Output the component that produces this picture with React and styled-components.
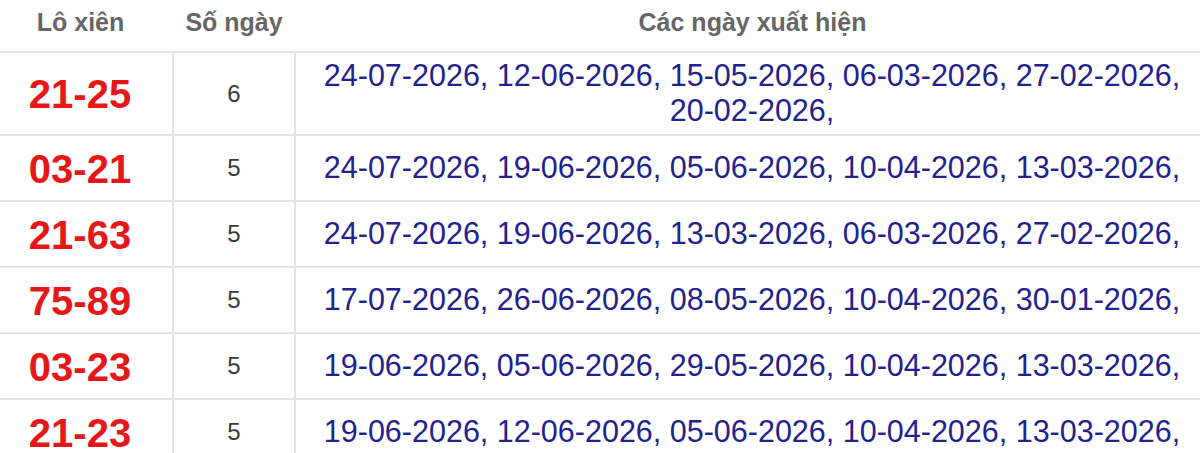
import React from "react";
import styled, { createGlobalStyle } from "styled-components";

const GlobalStyle = createGlobalStyle`
  html, body {
    margin: 0;
    padding: 0;
    background: #ffffff;
    overflow: hidden;
  }
  body {
    font-family: "Liberation Sans", Arial, sans-serif;
  }
`;

const Table = styled.table`
  width: 1200px;
  border-collapse: collapse;
  table-layout: fixed;
`;

const HeadCell = styled.th`
  height: 52px;
  padding: 0;
  font-size: 25px;
  font-weight: 700;
  color: #666666;
  text-align: center;
  vertical-align: top;
  padding-top: 8px;
  box-sizing: border-box;
  border-bottom: 2px solid #e4e4e4;
  padding-right: ${(p) => (p.$first ? "12px" : "0")};
  padding-left: ${(p) => (p.$last ? "10px" : "0")};
`;

const Row = styled.tr`
  height: ${(p) => (p.$tall ? "83px" : "66px")};
`;

const Cell = styled.td`
  border-bottom: 2px solid #e4e4e4;
  border-left: ${(p) => (p.$first ? "none" : "2px solid #e4e4e4")};
  text-align: center;
  vertical-align: middle;
  padding: 0;
`;

const Pair = styled(Cell)`
  font-size: 40px;
  font-weight: 700;
  color: #e51717;
  padding-right: 12px;
  padding-top: 2px;
`;

const Count = styled(Cell)`
  font-size: 24px;
  color: #3a3a3a;
`;

const Dates = styled(Cell)`
  font-size: 30.5px;
  line-height: 35px;
  color: #22228f;
  padding-left: 8px;
  padding-bottom: 2px;
`;

const rows = [
  {
    pair: "21-25",
    count: 6,
    dates: "24-07-2026, 12-06-2026, 15-05-2026, 06-03-2026, 27-02-2026, 20-02-2026,",
    tall: true,
  },
  { pair: "03-21", count: 5, dates: "24-07-2026, 19-06-2026, 05-06-2026, 10-04-2026, 13-03-2026," },
  { pair: "21-63", count: 5, dates: "24-07-2026, 19-06-2026, 13-03-2026, 06-03-2026, 27-02-2026," },
  { pair: "75-89", count: 5, dates: "17-07-2026, 26-06-2026, 08-05-2026, 10-04-2026, 30-01-2026," },
  { pair: "03-23", count: 5, dates: "19-06-2026, 05-06-2026, 29-05-2026, 10-04-2026, 13-03-2026," },
  { pair: "21-23", count: 5, dates: "19-06-2026, 12-06-2026, 05-06-2026, 10-04-2026, 13-03-2026," },
];

const App = () => {
  return (
    <>
      <GlobalStyle />
      <Table>
        <colgroup>
          <col style={{ width: "173px" }} />
          <col style={{ width: "122px" }} />
          <col />
        </colgroup>
        <thead>
          <tr>
            <HeadCell $first>Lô xiên</HeadCell>
            <HeadCell>Số ngày</HeadCell>
            <HeadCell $last>Các ngày xuất hiện</HeadCell>
          </tr>
        </thead>
        <tbody>
          {rows.map((row) => (
            <Row key={row.pair} $tall={row.tall}>
              <Pair $first>{row.pair}</Pair>
              <Count>{row.count}</Count>
              <Dates>{row.dates}</Dates>
            </Row>
          ))}
        </tbody>
      </Table>
    </>
  );
};

export default App;
